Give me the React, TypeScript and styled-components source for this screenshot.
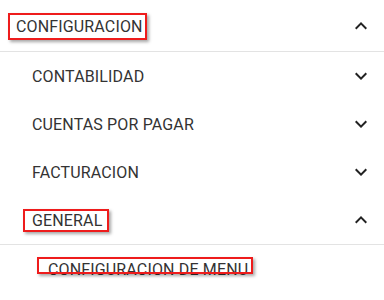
import React from "react";
import styled, { createGlobalStyle } from "styled-components";

const Global = createGlobalStyle`
  html, body { margin: 0; padding: 0; background: #fff; }
  body { font-family: Roboto, "Liberation Sans", Arial, sans-serif; }
`;

const Menu = styled.nav`
  width: 384px;
  display: flex;
  flex-direction: column;
  background: #fff;
`;

const Row = styled.div<{ $level: number; $height: number; $divider?: boolean }>`
  display: flex;
  align-items: center;
  justify-content: space-between;
  box-sizing: border-box;
  height: ${(p) => p.$height}px;
  padding-left: ${(p) => 16 + p.$level * 16}px;
  padding-right: 11px;
  border-bottom: ${(p) => (p.$divider ? "1px solid #e3e3e3" : "none")};
`;

const Label = styled.span<{ $shift?: number }>`
  position: relative;
  font-size: 16px;
  line-height: 19px;
  color: #333;
  letter-spacing: 0.15px;
  white-space: nowrap;
  top: ${(p) => p.$shift ?? 0}px;
`;

const Highlight = styled.span<{ $t: number; $r: number; $b: number; $l: number }>`
  position: absolute;
  top: ${(p) => p.$t}px;
  right: ${(p) => p.$r}px;
  bottom: ${(p) => p.$b}px;
  left: ${(p) => p.$l}px;
  border: 2px solid #ee1c1c;
  box-shadow: 2px 2px 3px rgba(0, 0, 0, 0.35);
  pointer-events: none;
`;

const Chevron = styled.svg`
  width: 24px;
  height: 24px;
  fill: #222;
  flex: none;
`;

const Up = () => (
  <Chevron viewBox="0 0 24 24">
    <path d="M12 8l-6 6 1.41 1.41L12 10.83l4.59 4.58L18 14z" />
  </Chevron>
);

const Down = () => (
  <Chevron viewBox="0 0 24 24">
    <path d="M16.59 8.59L12 13.17 7.41 8.59 6 10l6 6 6-6z" />
  </Chevron>
);

type Box = [number, number, number, number];

const Item = ({
  label,
  level,
  height,
  divider,
  open,
  box,
  shift,
}: {
  label: string;
  level: number;
  height: number;
  divider?: boolean;
  open?: boolean;
  box?: Box;
  shift?: number;
}) => (
  <Row $level={level} $height={height} $divider={divider}>
    <Label $shift={shift}>
      {label}
      {box && <Highlight $t={box[0]} $r={box[1]} $b={box[2]} $l={box[3]} />}
    </Label>
    {open === undefined ? null : open ? <Up /> : <Down />}
  </Row>
);

export default function App() {
  return (
    <>
      <Global />
      <Menu>
        <Item label="CONFIGURACION" level={0} height={52} divider open shift={1} box={[-4, -4, -4, -8]} />
        <Item label="CONTABILIDAD" level={1} height={48} open={false} />
        <Item label="CUENTAS POR PAGAR" level={1} height={48} open={false} />
        <Item label="FACTURACION" level={1} height={48} open={false} />
        <Item label="GENERAL" level={1} height={49} divider open box={[-2, -7, -2, -9]} />
        <Item label="CONFIGURACION DE MENU" level={2} height={48} shift={0} box={[-3, -5, 5, -11]} />
      </Menu>
    </>
  );
}
